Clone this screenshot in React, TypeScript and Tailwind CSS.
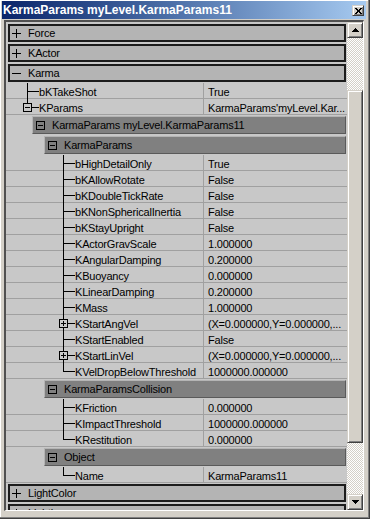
import React from "react";

type Kind = "mid" | "last";
type Box = "plus" | "minus" | undefined;

function Connector({ kind, box }: { kind: Kind; box?: Box }) {
  return (
    <svg width="18" height="16" className="block shrink-0" shapeRendering="crispEdges" stroke="#000" strokeWidth={1}>
      {box ? (
        <>
          <line x1={6.5} y1={0} x2={6.5} y2={4} />
          {kind === "mid" && <line x1={6.5} y1={13} x2={6.5} y2={16} />}
          <rect x={2.5} y={4.5} width={8} height={8} fill="none" />
          <line x1={4} y1={8.5} x2={9} y2={8.5} />
          {box === "plus" && <line x1={6.5} y1={6} x2={6.5} y2={11} />}
          <line x1={11} y1={8.5} x2={18} y2={8.5} />
        </>
      ) : (
        <>
          <line x1={6.5} y1={0} x2={6.5} y2={kind === "mid" ? 16 : 9} />
          <line x1={6.5} y1={8.5} x2={18} y2={8.5} />
        </>
      )}
    </svg>
  );
}

function Row({
  level,
  kind,
  box,
  name,
  value,
}: {
  level: 1 | 3;
  kind: Kind;
  box?: Box;
  name: string;
  value: string;
}) {
  return (
    <div className="flex h-[16px] shrink-0 bg-[#c8c8c8] shadow-[inset_0_-1px_#a0a0a0]">
      <div
        className={
          "flex w-[198px] shrink-0 overflow-hidden border-r border-[#a0a0a0] " +
          (level === 1 ? "pl-[15px]" : "pl-[51px]")
        }
      >
        <Connector kind={kind} box={box} />
        <span className="whitespace-nowrap pt-[3px] leading-[13px]">{name}</span>
      </div>
      <div className="flex-1 overflow-hidden pl-[4px]">
        <span className="block whitespace-nowrap pt-[3px] leading-[13px]">{value}</span>
      </div>
    </div>
  );
}

function Header({ level, label }: { level: 2 | 3; label: string }) {
  return (
    <div className="shrink-0 bg-[#c8c8c8] py-[1px]">
      <div
        className={
          "mr-[1px] flex h-[18px] items-center border border-t-[#b4b4b4] border-l-[#b4b4b4] border-r-[#5a5a5a] border-b-[#5a5a5a] bg-[#808080] pl-[3px] " +
          (level === 2 ? "ml-[26px]" : "ml-[38px]")
        }
      >
        <svg width="9" height="9" className="block shrink-0" shapeRendering="crispEdges" stroke="#000">
          <rect x={0.5} y={0.5} width={8} height={8} fill="none" />
          <line x1={2} y1={4.5} x2={7} y2={4.5} />
        </svg>
        <span className="ml-[7px] whitespace-nowrap leading-[14px] text-black">{label}</span>
      </div>
    </div>
  );
}

function Group({ label, open, className }: { label: string; open?: boolean; className: string }) {
  return (
    <div
      className={
        "ml-[2px] mr-[1px] flex h-[18px] shrink-0 items-center border-2 border-[#1c1c1c] bg-[#b4b4b4] pl-[2px] " +
        className
      }
    >
      <svg width="9" height="9" className="block shrink-0" shapeRendering="crispEdges" stroke="#000">
        <line x1={0} y1={4.5} x2={9} y2={4.5} />
        {!open && <line x1={4.5} y1={0} x2={4.5} y2={9} />}
      </svg>
      <span className="ml-[7px] whitespace-nowrap leading-[14px]">{label}</span>
    </div>
  );
}

const raised =
  "border border-t-[#d4d0c8] border-l-[#d4d0c8] border-r-[#404040] border-b-[#404040] bg-[#d4d0c8] shadow-[inset_1px_1px_#ffffff,inset_-1px_-1px_#808080]";

const karmaRows: { name: string; value: string; box?: Box; kind: Kind }[] = [
  { name: "bHighDetailOnly", value: "True", kind: "mid" },
  { name: "bKAllowRotate", value: "False", kind: "mid" },
  { name: "bKDoubleTickRate", value: "False", kind: "mid" },
  { name: "bKNonSphericalInertia", value: "False", kind: "mid" },
  { name: "bKStayUpright", value: "False", kind: "mid" },
  { name: "KActorGravScale", value: "1.000000", kind: "mid" },
  { name: "KAngularDamping", value: "0.200000", kind: "mid" },
  { name: "KBuoyancy", value: "0.000000", kind: "mid" },
  { name: "KLinearDamping", value: "0.200000", kind: "mid" },
  { name: "KMass", value: "1.000000", kind: "mid" },
  { name: "KStartAngVel", value: "(X=0.000000,Y=0.000000,...", kind: "mid", box: "plus" },
  { name: "KStartEnabled", value: "False", kind: "mid" },
  { name: "KStartLinVel", value: "(X=0.000000,Y=0.000000,...", kind: "mid", box: "plus" },
  { name: "KVelDropBelowThreshold", value: "1000000.000000", kind: "last" },
];

const collisionRows: { name: string; value: string; kind: Kind }[] = [
  { name: "KFriction", value: "0.000000", kind: "mid" },
  { name: "KImpactThreshold", value: "1000000.000000", kind: "mid" },
  { name: "KRestitution", value: "0.000000", kind: "last" },
];

export default function App() {
  return (
    <div className="flex h-[519px] w-[370px] flex-col border-r border-b border-[#404040] bg-[#d4d0c8] pt-[1px] pl-[2px] pr-[3px] font-['Liberation_Sans',Arial,sans-serif] text-[11px] tracking-[-0.2px] text-black shadow-[inset_-1px_-1px_#808080,inset_1px_1px_#ffffff]">
      {/* Title bar */}
      <div className="flex h-[18px] shrink-0 bg-linear-to-r from-[#0a246a] to-[#a6caf0]">
        <span className="whitespace-nowrap pl-[1px] pt-[2px] text-[12px] font-bold leading-[14px] tracking-normal text-white">
          KarmaParams myLevel.KarmaParams11
        </span>
        <div className={"ml-auto mr-[2px] mt-[4px] flex h-[11px] w-[12px] items-center justify-center " + raised}>
          <svg width="7" height="6" className="block" shapeRendering="crispEdges" fill="#000">
            <rect x="0" y="0" width="2" height="1" />
            <rect x="5" y="0" width="2" height="1" />
            <rect x="1" y="1" width="2" height="1" />
            <rect x="4" y="1" width="2" height="1" />
            <rect x="2" y="2" width="3" height="2" />
            <rect x="1" y="4" width="2" height="1" />
            <rect x="4" y="4" width="2" height="1" />
            <rect x="0" y="5" width="2" height="1" />
            <rect x="5" y="5" width="2" height="1" />
          </svg>
        </div>
      </div>

      {/* Content */}
      <div className="ml-[2px] mt-[1px] flex h-[491px] w-[360px] shrink-0 border-t-2 border-l-2 border-r border-b border-t-[#505050] border-l-[#505050] border-r-[#ffffff] border-b-[#ffffff]">
        <div className="flex h-full w-[341px] shrink-0 flex-col overflow-hidden bg-[#c8c8c8] pt-[2px]">
          <Group label="Force" className="" />
          <Group label="KActor" className="mt-[2px]" />
          <Group label="Karma" open className="mt-[2px]" />
          <div className="mt-[1px]" />
          <Row level={1} kind="mid" name="bKTakeShot" value="True" />
          <Row level={1} kind="last" box="minus" name="KParams" value="KarmaParams'myLevel.Kar..." />
          <Header level={2} label="KarmaParams myLevel.KarmaParams11" />
          <Header level={3} label="KarmaParams" />
          {karmaRows.map((r) => (
            <Row key={r.name} level={3} kind={r.kind} box={r.box} name={r.name} value={r.value} />
          ))}
          <Header level={3} label="KarmaParamsCollision" />
          {collisionRows.map((r) => (
            <Row key={r.name} level={3} kind={r.kind} name={r.name} value={r.value} />
          ))}
          <Header level={3} label="Object" />
          <Row level={3} kind="last" name="Name" value="KarmaParams11" />
          <Group label="LightColor" className="mt-[1px]" />
          <Group label="Lighting" className="mt-[2px]" />
        </div>

        {/* Scrollbar */}
        <div className="flex h-full w-[16px] shrink-0 flex-col">
          <div className={"flex h-[16px] shrink-0 items-center justify-center " + raised}>
            <svg width="7" height="4" className="block -mt-[1px]" shapeRendering="crispEdges">
              <polygon points="3.5,0 7,4 0,4" fill="#000" />
            </svg>
          </div>
          <div className="h-[52px] shrink-0 bg-[conic-gradient(#ffffff_25%,#d4d0c8_0_50%,#ffffff_0_75%,#d4d0c8_0)] bg-[length:2px_2px]" />
          <div className={"h-[353px] shrink-0 " + raised} />
          <div className="flex-1 bg-[conic-gradient(#ffffff_25%,#d4d0c8_0_50%,#ffffff_0_75%,#d4d0c8_0)] bg-[length:2px_2px]" />
          <div className={"flex h-[16px] shrink-0 items-center justify-center " + raised}>
            <svg width="7" height="4" className="block" shapeRendering="crispEdges">
              <polygon points="0,0 7,0 3.5,4" fill="#000" />
            </svg>
          </div>
        </div>
      </div>
    </div>
  );
}
